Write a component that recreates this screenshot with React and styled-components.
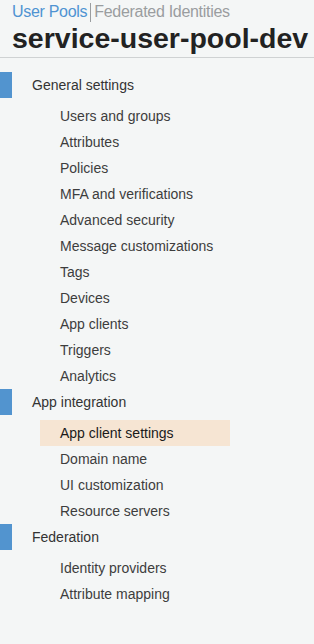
import React from "react";
import styled, { createGlobalStyle } from "styled-components";

const Global = createGlobalStyle`
  html, body { margin: 0; padding: 0; background: #f4f6f6; }
  body { font-family: "Liberation Sans", Arial, sans-serif; }
`;

const Page = styled.div`
  width: 314px;
  min-height: 644px;
  background: #f4f6f6;
  overflow: hidden;
`;

const Header = styled.div`
  padding: 1px 0 0 12px;
  border-bottom: 1px solid #cfd2d3;
  height: 58px;
  box-sizing: border-box;
`;

const Tabs = styled.div`
  display: flex;
  align-items: center;
  font-size: 16px;
  line-height: 22px;
  letter-spacing: -0.3px;
`;

const Tab = styled.span`
  color: ${(p) => (p.$active ? "#4f93d2" : "#9a9d9f")};
`;

const Sep = styled.span`
  width: 1px;
  height: 19px;
  background: #9a9d9f;
  margin: 0 3px 0 3px;
`;

const Title = styled.h1`
  margin: 0;
  font-size: 28.5px;
  font-weight: 700;
  line-height: 31px;
  color: #222;
  letter-spacing: 0;
  white-space: nowrap;
`;

const Nav = styled.nav`
  padding-top: 14px;
`;

const Section = styled.div`
  display: flex;
  flex-direction: column;
`;

const SectionHead = styled.div`
  display: flex;
  align-items: center;
  height: 26px;
  font-size: 14px;
  color: #333;
  &::before {
    content: "";
    width: 12px;
    height: 26px;
    background: #5294cf;
    margin-right: 20px;
  }
`;

const Items = styled.ul`
  list-style: none;
  margin: 5px 0 0;
  padding: 0;
`;

const Item = styled.li`
  display: flex;
  align-items: center;
  height: 26px;
  width: 190px;
  margin-left: 40px;
  padding-left: 20px;
  box-sizing: border-box;
  font-size: 14px;
  color: ${(p) => (p.$active ? "#1a1a1a" : "#3d3d3d")};
  background: ${(p) => (p.$active ? "#f6e5d3" : "transparent")};
`;

const sections = [
  {
    title: "General settings",
    items: [
      "Users and groups",
      "Attributes",
      "Policies",
      "MFA and verifications",
      "Advanced security",
      "Message customizations",
      "Tags",
      "Devices",
      "App clients",
      "Triggers",
      "Analytics",
    ],
  },
  {
    title: "App integration",
    items: ["App client settings", "Domain name", "UI customization", "Resource servers"],
  },
  {
    title: "Federation",
    items: ["Identity providers", "Attribute mapping"],
  },
];

export default function App() {
  return (
    <Page>
      <Global />
      <Header>
        <Tabs>
          <Tab $active>User Pools</Tab>
          <Sep />
          <Tab>Federated Identities</Tab>
        </Tabs>
        <Title>service-user-pool-dev</Title>
      </Header>
      <Nav>
        {sections.map((s) => (
          <Section key={s.title}>
            <SectionHead>{s.title}</SectionHead>
            <Items>
              {s.items.map((it) => (
                <Item key={it} $active={it === "App client settings"}>
                  {it}
                </Item>
              ))}
            </Items>
          </Section>
        ))}
      </Nav>
    </Page>
  );
}
